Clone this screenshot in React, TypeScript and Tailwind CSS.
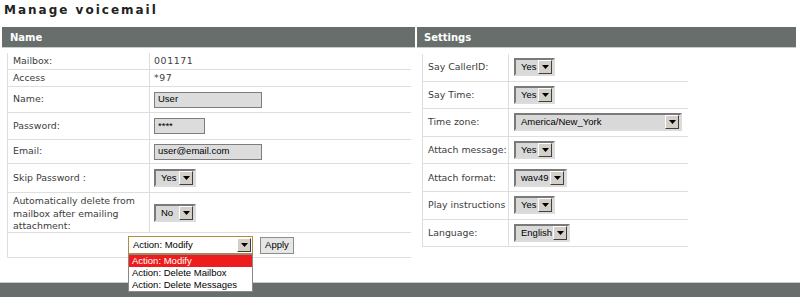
import React from 'react';

const Arrow: React.FC = () => (
  <div className="ml-auto mr-[1px] flex h-[14px] w-[14px] shrink-0 items-center justify-center border border-t-white border-l-white border-b-[#404040] border-r-[#404040] bg-[#d4d0c8]">
    <svg width="7" height="4" viewBox="0 0 7 4">
      <path d="M0 0h7L3.5 4z" fill="#000" />
    </svg>
  </div>
);

const Select: React.FC<{ value: string; className: string }> = ({ value, className }) => (
  <div className={`flex h-[18px] items-center border-2 border-t-[#7a7a7a] border-l-[#7a7a7a] border-b-[#dcdcdc] border-r-[#dcdcdc] bg-[#d9d9d9] pl-[5px] font-['Liberation_Sans',Arial,sans-serif] text-[9.5px] text-black ${className}`}>
    <span className="whitespace-nowrap">{value}</span>
    <Arrow />
  </div>
);

const Input: React.FC<{ value: string; className: string }> = ({ value, className }) => (
  <div className={`flex items-center border border-[#7d7d7d] bg-[#dcdcdc] px-[3px] font-['Liberation_Sans',Arial,sans-serif] text-[9.5px] text-black ${className}`}>
    {value}
  </div>
);

const LeftRow: React.FC<{ label: React.ReactNode; h: string; children: React.ReactNode }> = ({ label, h, children }) => (
  <div className={`grid grid-cols-[142px_1fr] border-b border-[#dedede] ${h}`}>
    <div className="flex items-center whitespace-nowrap border-r border-[#dedede] pl-[5px] leading-[12.5px]">{label}</div>
    <div className="flex items-center pl-[4px]">{children}</div>
  </div>
);

const RightRow: React.FC<{ label: string; children: React.ReactNode }> = ({ label, children }) => (
  <div className="grid h-[27.6px] grid-cols-[86px_1fr] border-b border-[#dedede]">
    <div className="flex items-center whitespace-nowrap border-r border-[#dedede] pl-[5px]">{label}</div>
    <div className="flex items-center pl-[5px]">{children}</div>
  </div>
);

const App: React.FC = () => {
  return (
    <div className="relative h-[297px] w-[800px] overflow-hidden bg-white font-['DejaVu_Sans',Verdana,sans-serif] text-[9.4px] text-[#3c3c3c]">
      <h1 className="h-[27px] pl-[4px] pt-[1px] text-[12px] font-bold tracking-[2px] text-[#222]">Manage voicemail</h1>

      <div className="flex h-[255px]">
        {/* Name column */}
        <div className="ml-[2px] w-[413px]">
          <div className="flex h-[21px] items-center border-b border-[#c9cccb] bg-[#676e6b] pl-[8px] text-[10px] font-bold text-white">
            Name
          </div>
          <div className="ml-[5px] mt-[5px] w-[404px] border-l border-[#dedede]">
            <LeftRow label="Mailbox:" h="h-[17px]">
              <span className="tracking-[0.6px]">001171</span>
            </LeftRow>
            <LeftRow label="Access" h="h-[17px]">
              <span className="tracking-[0.6px]">*97</span>
            </LeftRow>
            <LeftRow label="Name:" h="h-[26px]">
              <Input value="User" className="h-[16px] w-[108px]" />
            </LeftRow>
            <LeftRow label="Password:" h="h-[27px]">
              <Input value="****" className="h-[16px] w-[51px] text-[8px]" />
            </LeftRow>
            <LeftRow label="Email:" h="h-[24px]">
              <Input value="user@email.com" className="h-[16px] w-[108px]" />
            </LeftRow>
            <LeftRow label="Skip Password :" h="h-[29px]">
              <Select value="Yes" className="w-[42px]" />
            </LeftRow>
            <LeftRow
              label={<span className="pt-[2px]">Automatically delete from<br />mailbox after emailing<br />attachment:</span>}
              h="h-[40px]"
            >
              <Select value="No" className="w-[42px]" />
            </LeftRow>
            <div className="flex h-[25px] items-center border-b border-[#dedede] pl-[120px]">
              <div className="relative">
                <div className="flex h-[18px] w-[125px] items-center border border-[#b08c3c] bg-white pl-[4px] font-['Liberation_Sans',Arial,sans-serif] text-[9.5px] text-black">
                  <span>Action: Modify</span>
                  <Arrow />
                </div>
                <div className="absolute left-0 top-[18px] z-10 w-[125px] border border-[#8a8a8a] bg-white font-['Liberation_Sans',Arial,sans-serif] text-[9.5px] leading-[12px] text-black">
                  <div className="bg-[#ee1c1c] pl-[3px] text-white">Action: Modify</div>
                  <div className="whitespace-nowrap pl-[3px]">Action: Delete Mailbox</div>
                  <div className="whitespace-nowrap pl-[3px]">Action: Delete Messages</div>
                </div>
              </div>
              <button className="ml-[7px] h-[17px] w-[34px] border border-[#8c8c8c] bg-[#e6e6e6] font-['Liberation_Sans',Arial,sans-serif] text-[9.5px] text-black">
                Apply
              </button>
            </div>
          </div>
        </div>

        {/* Settings column */}
        <div className="ml-[2px] w-[379px]">
          <div className="flex h-[21px] items-center border-b border-[#c9cccb] bg-[#676e6b] pl-[7px] text-[10px] font-bold text-white">
            Settings
          </div>
          <div className="ml-[5px] mt-[6px] w-[266px] border-l border-[#dedede]">
            <RightRow label="Say CallerID:">
              <Select value="Yes" className="w-[41px]" />
            </RightRow>
            <RightRow label="Say Time:">
              <Select value="Yes" className="w-[41px]" />
            </RightRow>
            <RightRow label="Time zone:">
              <Select value="America/New_York" className="w-[168px]" />
            </RightRow>
            <RightRow label="Attach message:">
              <Select value="Yes" className="w-[41px]" />
            </RightRow>
            <RightRow label="Attach format:">
              <Select value="wav49" className="w-[53px]" />
            </RightRow>
            <RightRow label="Play instructions">
              <Select value="Yes" className="w-[41px]" />
            </RightRow>
            <RightRow label="Language:">
              <Select value="English" className="w-[56px]" />
            </RightRow>
          </div>
        </div>
      </div>

      <div className="h-[15px] border-t border-[#c9cccb] bg-[#676e6b]" />
    </div>
  );
};

export default App;
